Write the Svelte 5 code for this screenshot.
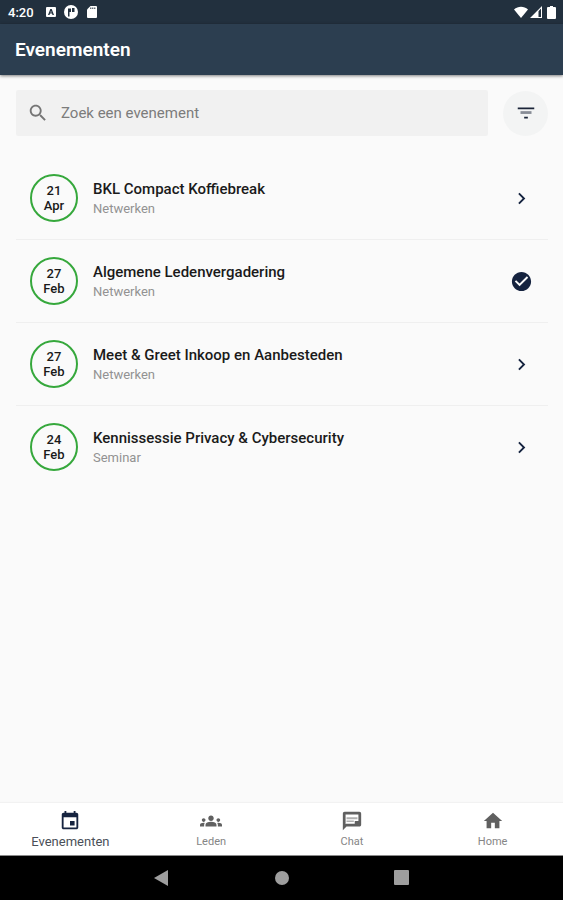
<script>
  let query = '';

  const events = [
    { day: '21', month: 'Apr', title: 'BKL Compact Koffiebreak', type: 'Netwerken', attending: false },
    { day: '27', month: 'Feb', title: 'Algemene Ledenvergadering', type: 'Netwerken', attending: true },
    { day: '27', month: 'Feb', title: 'Meet & Greet Inkoop en Aanbesteden', type: 'Netwerken', attending: false },
    { day: '24', month: 'Feb', title: 'Kennissessie Privacy & Cybersecurity', type: 'Seminar', attending: false },
  ];

  const tabs = [
    {
      label: 'Evenementen',
      icon: 'M17 12h-5v5h5v-5zM16 1v2H8V1H6v2H5c-1.11 0-1.99.9-1.99 2L3 19c0 1.1.89 2 2 2h14c1.1 0 2-.9 2-2V5c0-1.1-.9-2-2-2h-1V1h-2zm3 18H5V8h14v11z',
    },
    {
      label: 'Leden',
      icon: 'M12 12.75c1.63 0 3.07.39 4.24.9 1.08.48 1.76 1.56 1.76 2.73V18H6v-1.61c0-1.18.68-2.26 1.76-2.73 1.17-.52 2.61-.91 4.24-.91zM4 13c1.1 0 2-.9 2-2s-.9-2-2-2-2 .9-2 2 .9 2 2 2zm1.13 1.1c-.37-.06-.74-.1-1.13-.1-.99 0-1.93.21-2.78.58C.48 14.9 0 15.62 0 16.43V18h4.5v-1.61c0-.83.23-1.61.63-2.29zM20 13c1.1 0 2-.9 2-2s-.9-2-2-2-2 .9-2 2 .9 2 2 2zm4 3.43c0-.81-.48-1.53-1.22-1.85-.85-.37-1.79-.58-2.78-.58-.39 0-.76.04-1.13.1.4.68.63 1.46.63 2.29V18H24v-1.57zM12 6c1.66 0 3 1.34 3 3s-1.34 3-3 3-3-1.34-3-3 1.34-3 3-3z',
    },
    {
      label: 'Chat',
      icon: 'M5 5h14v7h-4v3H5.500L5 15.500V5M4 2c-1.1 0-1.99.9-1.99 2L2 22l4-4h14c1.1 0 2-.9 2-2V4c0-1.1-.9-2-2-2H4z',
      lines: 'M6 11.500h8v1.500H6zM6 8h12v2H6z',
    },
    { label: 'Home', icon: 'M10 20v-6h4v6h5v-8h3L12 3 2 12h3v8z' },
  ];

  let activeTab = 'Evenementen';

  $: visibleEvents = events.filter((event) => event.title.toLowerCase().includes(query.toLowerCase()));
</script>

<div class="screen">
  <div class="status-bar">
    <span>4:20</span>
    <svg class="status-icon notice" viewBox="0 0 12 12" aria-hidden="true">
      <path fill-rule="evenodd" d="M2 1h8a1 1 0 0 1 1 1v8a1 1 0 0 1-1 1H2a1 1 0 0 1-1-1V2a1 1 0 0 1 1-1zm3.300 2L3 9h1.500l.5-1.400h2L7.500 9H9L6.700 3zm.7 1.700.6 1.800H5.400z" />
    </svg>
    <svg class="status-icon wide" viewBox="0 0 14 14" aria-hidden="true">
      <circle cx="7" cy="7" r="7" />
      <path class="cut" d="M4 3.500h3V7H5.500v4.500H4zM8 3h2.500v4H8z" />
    </svg>
    <svg class="status-icon card" viewBox="0 0 12 14" aria-hidden="true">
      <path d="M4.500 1H10a1 1 0 0 1 1 1v10a1 1 0 0 1-1 1H2a1 1 0 0 1-1-1V4.500z" />
      <path class="cut" d="M4.300 2.500h1v1.500h-1zM6.300 2.500h1v1.500h-1zM8.300 2.500h1v1.500h-1z" />
    </svg>
    <span class="spacer"></span>
    <svg class="status-icon wifi" viewBox="0 0 14 12" aria-hidden="true">
      <path d="M7 12 0 3.500C4-.2 10-.2 14 3.500z" />
    </svg>
    <svg class="status-icon signal" viewBox="0 0 12 12" aria-hidden="true">
      <path fill-rule="evenodd" d="M12 0v12H0zM11 2.600 8.500 5.200V11H11z" />
    </svg>
    <svg class="status-icon battery" viewBox="0 0 9 13" aria-hidden="true">
      <path d="M3 0h3v1h2a1 1 0 0 1 1 1v10a1 1 0 0 1-1 1H1a1 1 0 0 1-1-1V2a1 1 0 0 1 1-1h2z" />
    </svg>
  </div>

  <header class="app-bar">
    <h1>Evenementen</h1>
  </header>

  <main>
    <div class="toolbar">
      <label class="search">
        <svg viewBox="0 0 24 24" aria-hidden="true">
          <path d="M15.500 14h-.79l-.28-.27C15.410 12.590 16 11.110 16 9.500 16 5.910 13.090 3 9.500 3S3 5.910 3 9.500 5.910 16 9.500 16c1.610 0 3.090-.59 4.230-1.570l.27.28v.79l5 4.990L20.490 19l-4.990-5zm-6 0C7.010 14 5 11.990 5 9.500S7.010 5 9.500 5 14 7.010 14 9.500 11.990 14 9.500 14z" />
        </svg>
        <input type="text" placeholder="Zoek een evenement" aria-label="Zoek een evenement" bind:value={query} />
      </label>
      <button class="filter" type="button" aria-label="Filter">
        <svg viewBox="0 0 24 24" aria-hidden="true">
          <path d="M10 18h4v-2h-4v2zM3 6v2h18V6H3z" />
          <path class="soft" d="M6 13h12v-3H6v3z" />
        </svg>
      </button>
    </div>

    <ul class="events">
      {#each visibleEvents as event}
        <li>
          <a href="#event">
            <span class="date">
              <span>{event.day}</span>
              <span>{event.month}</span>
            </span>
            <span class="info">
              <strong>{event.title}</strong>
              <small>{event.type}</small>
            </span>
            <svg class="state" viewBox="0 0 24 24" aria-hidden="true">
              {#if event.attending}
                <path d="M12 2C6.480 2 2 6.480 2 12s4.480 10 10 10 10-4.480 10-10S17.520 2 12 2zm-2 15l-5-5 1.410-1.410L10 14.170l7.590-7.590L19 8l-9 9z" />
              {:else}
                <path d="M10 6L8.590 7.410 13.170 12l-4.580 4.590L10 18l6-6z" />
              {/if}
            </svg>
          </a>
        </li>
      {/each}
    </ul>
  </main>

  <nav class="tabs">
    {#each tabs as tab}
      <button type="button" class:active={activeTab === tab.label} on:click={() => (activeTab = tab.label)}>
        <svg viewBox="0 0 24 24" aria-hidden="true">
          <path fill-rule="evenodd" d={tab.icon} />
          {#if tab.lines}
            <path class="soft" d={tab.lines} />
          {/if}
        </svg>
        <span>{tab.label}</span>
      </button>
    {/each}
  </nav>

  <div class="system-bar">
    <button type="button" aria-label="Terug">
      <svg viewBox="0 0 16 16" aria-hidden="true"><path d="M14 0v16L0 8z" /></svg>
    </button>
    <button type="button" aria-label="Startscherm">
      <svg viewBox="0 0 16 16" aria-hidden="true"><circle cx="8" cy="8" r="7" /></svg>
    </button>
    <button type="button" aria-label="Recente apps">
      <svg viewBox="0 0 16 16" aria-hidden="true"><rect width="15" height="15" rx="1" /></svg>
    </button>
  </div>
</div>

<style>
  :global(body) {
    background: #fafafa;
  }

  .screen {
    display: flex;
    flex-direction: column;
    min-height: 100vh;
    font-family: Roboto, 'Liberation Sans', sans-serif;
    color: #1a1a1a;
  }

  button {
    border: none;
    padding: 0;
    font: inherit;
    cursor: pointer;
  }

  svg {
    display: block;
    fill: currentColor;
    flex: none;
  }

  .status-bar {
    display: flex;
    align-items: center;
    height: 24px;
    padding: 0 7px 0 8px;
    background: #22303e;
    color: #fff;
    font-size: 13px;
    font-weight: 500;
  }

  .status-icon {
    width: 12px;
    height: 12px;
  }

  .status-icon.notice {
    margin-left: 11px;
    margin-right: 7px;
  }

  .status-icon.wide {
    width: 14px;
    height: 14px;
  }

  .status-icon.wifi {
    width: 14px;
  }

  .status-icon.card {
    height: 14px;
    margin-left: 8px;
  }

  .status-icon.signal {
    margin: 0 5px 0 2px;
  }

  .status-icon.battery {
    width: 9px;
    height: 13px;
  }

  .cut {
    fill: #22303e;
  }

  .spacer {
    flex: 1;
  }

  .app-bar {
    display: flex;
    align-items: center;
    height: 51px;
    padding: 0 15px;
    background: #2c3e50;
    color: #fff;
    box-shadow: 0 1px 3px rgba(0, 0, 0, 0.5);
  }

  h1 {
    margin: 0;
    font-size: 19px;
    font-weight: 600;
  }

  main {
    flex: 1;
    padding: 15px 15px 0 16px;
  }

  .toolbar {
    display: flex;
    align-items: center;
    gap: 15px;
    margin-bottom: 21px;
  }

  .search {
    display: flex;
    flex: 1;
    align-items: center;
    gap: 12px;
    height: 46px;
    padding: 0 11px;
    background: #f1f1f1;
    border-radius: 2px;
    color: #757575;
  }

  .search svg {
    width: 22px;
    height: 22px;
  }

  .search input {
    flex: 1;
    min-width: 0;
    padding: 0;
    border: none;
    outline: none;
    background: none;
    font: inherit;
    font-size: 15px;
    color: #1a1a1a;
  }

  .search input::placeholder {
    color: #7c7c7c;
    opacity: 1;
  }

  .filter {
    display: grid;
    place-items: center;
    width: 45px;
    height: 45px;
    border-radius: 50%;
    background: #f3f4f4;
    color: #1b2438;
  }

  .filter svg {
    width: 22px;
    height: 22px;
  }

  .soft {
    opacity: 0.5;
  }

  .events {
    margin: 0;
    padding: 0;
    list-style: none;
  }

  .events li + li {
    border-top: 1px solid #efefef;
  }

  .events a {
    display: flex;
    align-items: center;
    gap: 15px;
    padding: 17px 15px 17px 14px;
    color: inherit;
    text-decoration: none;
  }

  .date {
    display: flex;
    flex-direction: column;
    align-items: center;
    justify-content: center;
    box-sizing: border-box;
    width: 48px;
    height: 48px;
    border: 2px solid #36a83c;
    border-radius: 50%;
    font-size: 13px;
    font-weight: 500;
    line-height: 15px;
  }

  .info {
    display: flex;
    flex: 1;
    flex-direction: column;
  }

  .info strong {
    font-size: 15px;
    font-weight: 500;
    line-height: 20px;
  }

  .info small {
    font-size: 13px;
    line-height: 19px;
    color: #929292;
  }

  .state {
    width: 23px;
    height: 23px;
    color: #15233f;
  }

  .tabs {
    display: grid;
    grid-template-columns: repeat(4, 1fr);
    height: 53px;
    background: #fff;
    border-bottom: 1px solid #8a8a8a;
    box-sizing: border-box;
    box-shadow: 0 -1px 1px rgba(0, 0, 0, 0.03);
  }

  .tabs button {
    display: flex;
    flex-direction: column;
    align-items: center;
    justify-content: center;
    gap: 2px;
    background: none;
    color: #606060;
    font-size: 11px;
    line-height: 15px;
  }

  .tabs svg {
    width: 22px;
    height: 22px;
  }

  .tabs span {
    color: #858585;
  }

  .tabs .active {
    color: #15233f;
    font-size: 13px;
  }

  .tabs .active span {
    color: #4a4f58;
  }

  .system-bar {
    display: flex;
    align-items: center;
    justify-content: center;
    gap: 104px;
    height: 44px;
    background: #000;
  }

  .system-bar button {
    background: none;
    color: #9e9e9e;
  }

  .system-bar svg {
    width: 16px;
    height: 16px;
  }
</style>
